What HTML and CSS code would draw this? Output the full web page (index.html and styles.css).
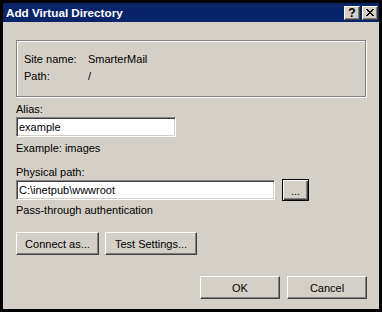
FILE: index.html
```html
<!DOCTYPE html>
<html>
<head>
    <title>Add Virtual Directory</title>
    <link rel="stylesheet" href="styles.css">
</head>
<body>
    <div class="window">
        <div class="titlebar">
            <span class="title">Add Virtual Directory</span>
            <div class="caption-buttons">
                <div class="cap-btn help">?</div>
                <div class="cap-btn close">
                    <svg width="8" height="7" viewBox="0 0 8 7">
                        <path d="M0 0h2v1h1v1h2v-1h1v-1h2v1h-1v1h-1v1h-1v1h1v1h1v1h1v1h-2v-1h-1v-1h-2v1h-1v1h-2v-1h1v-1h1v-1h1v-1h-1v-1h-1v-1h-1z" fill="#000"/>
                    </svg>
                </div>
            </div>
        </div>
        <div class="content">
            <div class="group">
                <div class="info-row"><span class="info-label">Site name:</span><span>SmarterMail</span></div>
                <div class="info-row"><span class="info-label">Path:</span><span>/</span></div>
            </div>

            <div class="label alias-label">Alias:</div>
            <div class="textbox alias">example</div>
            <div class="label hint">Example: images</div>

            <div class="label path-label">Physical path:</div>
            <div class="path-row">
                <div class="textbox path">C:\inetpub\wwwroot</div>
                <button class="btn browse">...</button>
            </div>
            <div class="label passthrough">Pass-through authentication</div>

            <div class="button-row">
                <button class="btn connect">Connect as...</button>
                <button class="btn test">Test Settings...</button>
            </div>

            <div class="dialog-buttons">
                <button class="btn ok">OK</button>
                <button class="btn cancel">Cancel</button>
            </div>
        </div>
    </div>
</body>
</html>
```

FILE: styles.css
```css
body {
    margin: 0;
    font-family: "Liberation Sans", Arial, sans-serif;
    font-size: 11px;
    color: #000;
    background: #000;
}
.window {
    width: 382px;
    height: 312px;
    box-sizing: border-box;
    border: 3px solid #000;
    background: #d4d0c8;
}
.titlebar {
    height: 19px;
    background: #0a246a;
    display: flex;
    align-items: center;
    justify-content: space-between;
    padding: 0 1px 0 3px;
}
.title {
    color: #fff;
    font-weight: bold;
    font-size: 11.7px;
}
.caption-buttons {
    display: flex;
    gap: 2px;
}
.cap-btn {
    width: 16px;
    height: 14px;
    box-sizing: border-box;
    background: #d4d0c8;
    border: 1px solid;
    border-color: #fff #404040 #404040 #fff;
    box-shadow: inset -1px -1px #808080;
    display: flex;
    align-items: center;
    justify-content: center;
    font-weight: bold;
    font-size: 12px;
    line-height: 12px;
}
.content {
    padding: 18px 12px 0 13px;
}
.group {
    width: 350px;
    height: 57px;
    box-sizing: border-box;
    border: 1px solid #808080;
    box-shadow: inset 1px 1px #fff, 1px 1px #fff;
    padding: 10px 7px 0;
}
.info-row {
    display: flex;
    line-height: 17px;
}
.info-label {
    width: 64px;
}
.label {
    line-height: 13px;
}
.alias-label {
    margin-top: 6px;
}
.textbox {
    height: 20px;
    box-sizing: border-box;
    background: #fff;
    border: 1px solid;
    border-color: #808080 #fff #fff #808080;
    box-shadow: inset 1px 1px #404040, inset -1px -1px #d4d0c8;
    padding: 0 2px;
    line-height: 18px;
}
.alias {
    width: 160px;
    margin-top: 1px;
}
.hint {
    margin-top: 5px;
}
.path-label {
    margin-top: 11px;
}
.path-row {
    display: flex;
    align-items: center;
    gap: 7px;
    height: 22px;
}
.path {
    width: 259px;
}
.passthrough {
    margin-top: 3px;
}
.btn {
    font-family: inherit;
    font-size: 11px;
    color: #000;
    background: #d4d0c8;
    height: 23px;
    box-sizing: border-box;
    border: 1px solid;
    border-color: #fff #404040 #404040 #fff;
    box-shadow: inset -1px -1px #808080;
    padding: 0;
    margin: 0;
}
.browse {
    width: 27px;
    height: 22px;
    border-color: #000;
    box-shadow: inset 1px 1px #fff, inset -1px -1px #404040, inset -2px -2px #808080;
    padding-top: 2px;
}
.button-row {
    display: flex;
    gap: 6px;
    margin-top: 15px;
}
.connect {
    width: 83px;
}
.test {
    width: 92px;
}
.dialog-buttons {
    display: flex;
    justify-content: flex-end;
    gap: 7px;
    margin-top: 21px;
}
.ok, .cancel {
    width: 80px;
}
```
